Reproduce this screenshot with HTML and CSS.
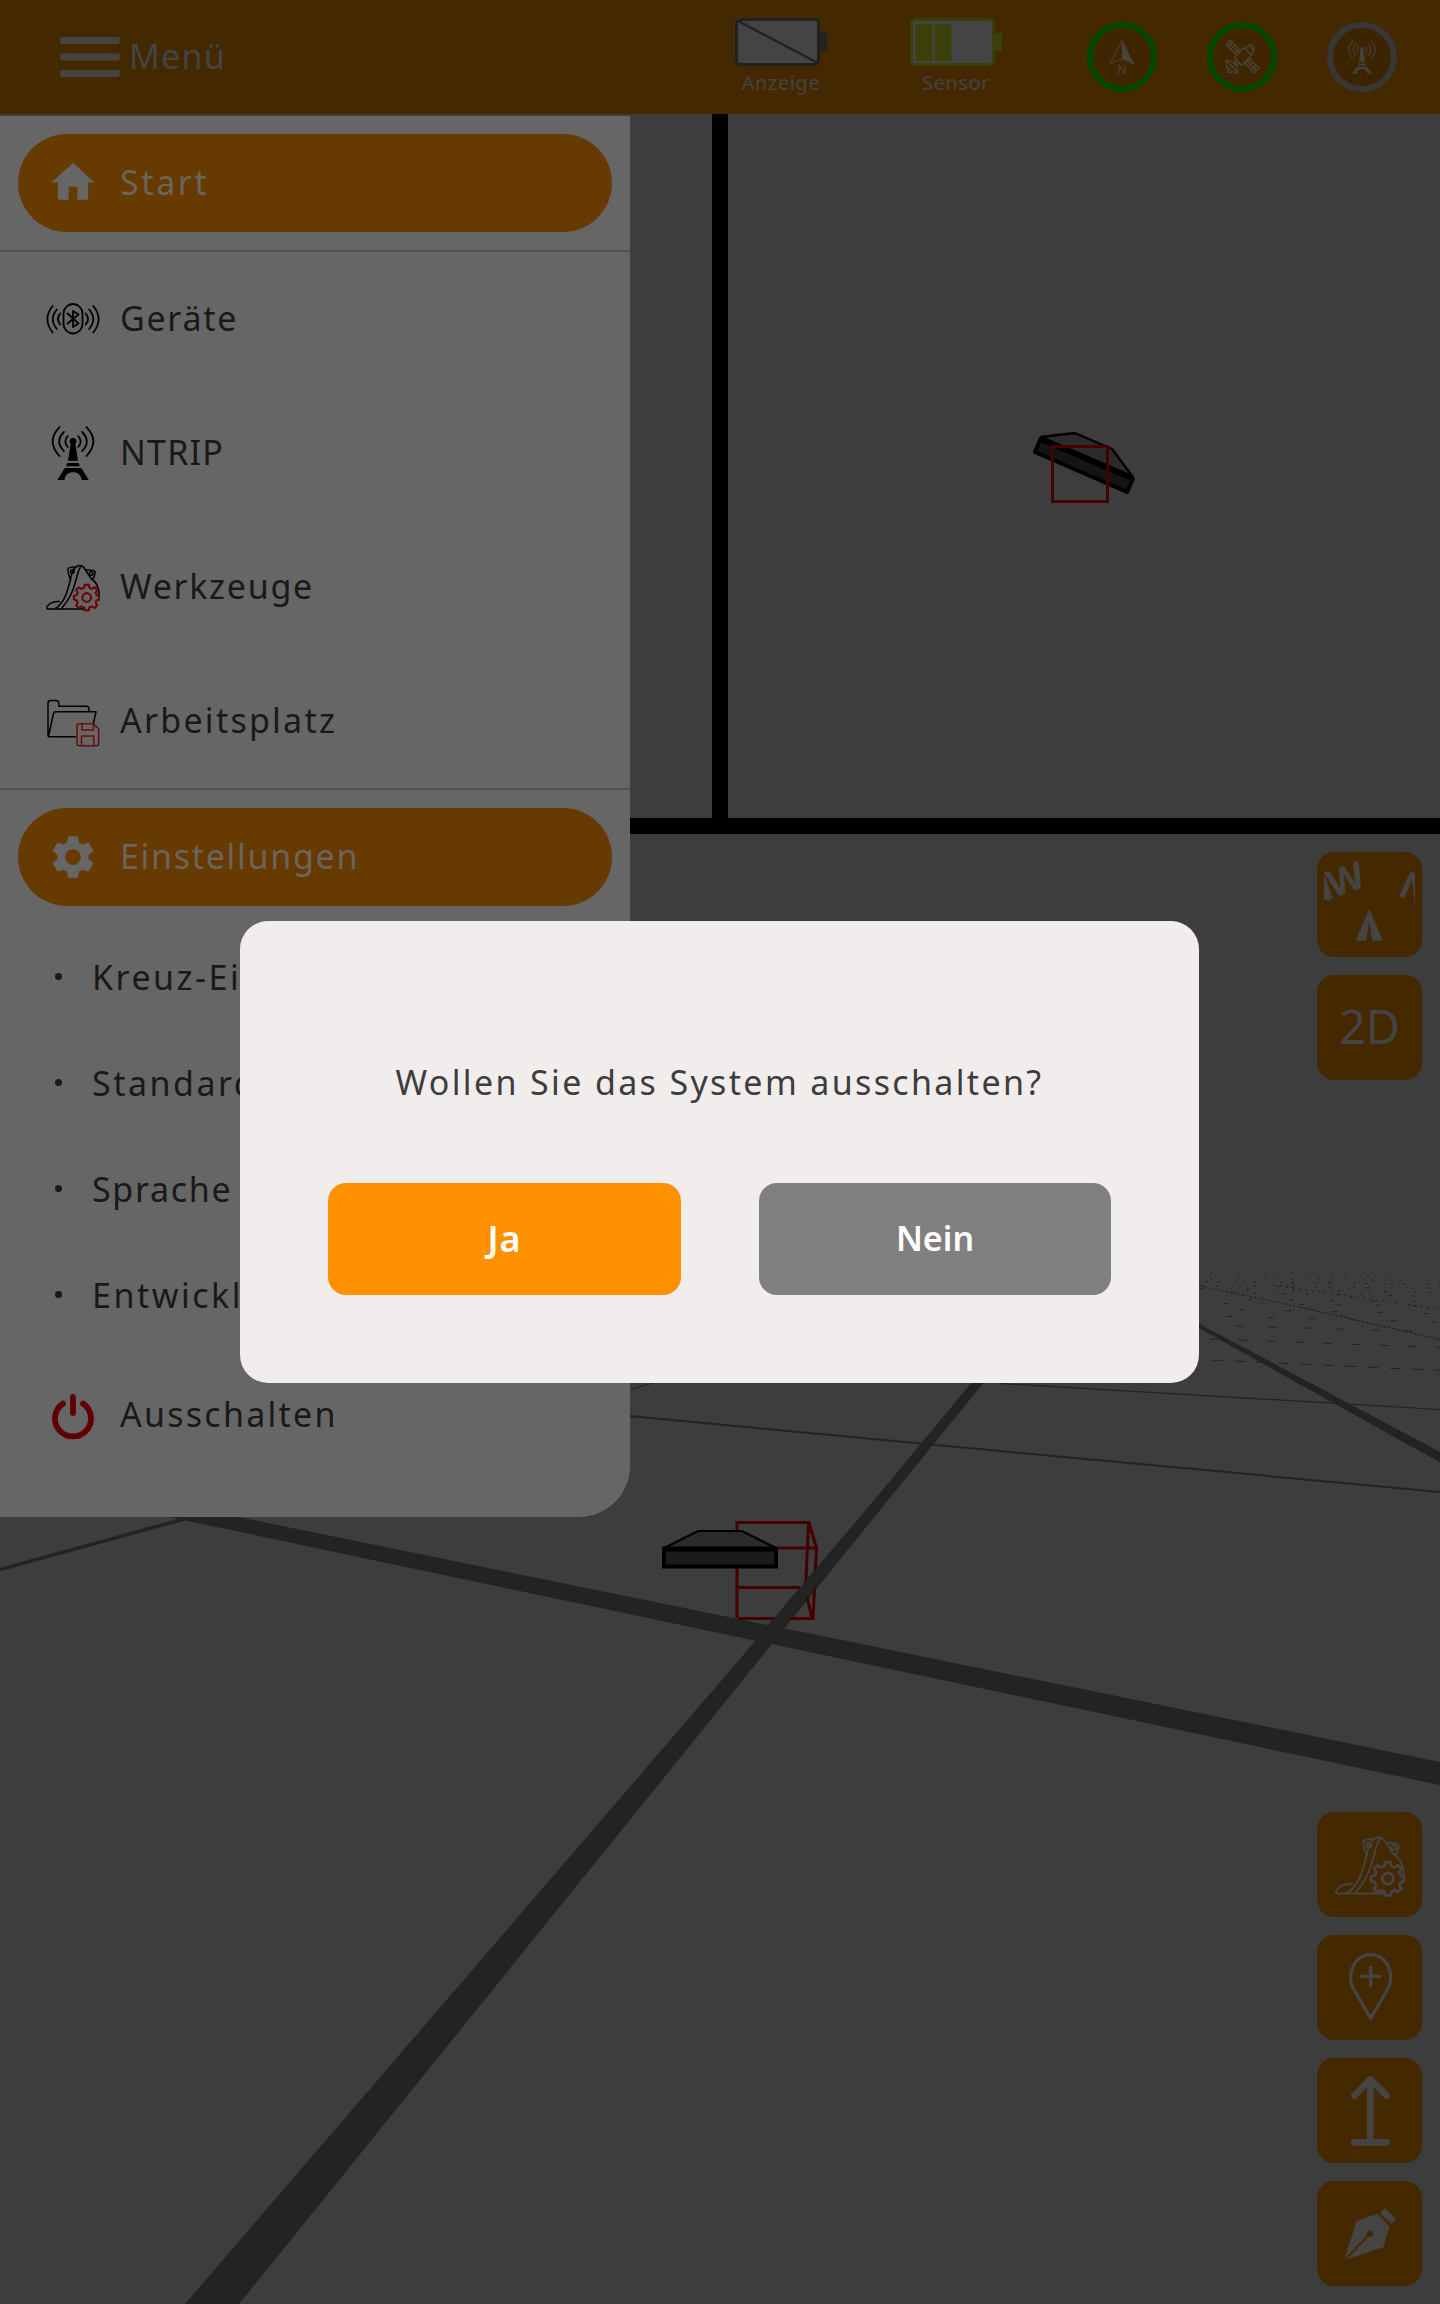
FILE: index.html
```html
<!DOCTYPE html>
<html lang="de">
<head>
<meta charset="utf-8">
<title>Menü</title>
<link rel="stylesheet" href="styles.css">
</head>
<body>
<svg class="defs" width="0" height="0">
  <symbol id="bucket" viewBox="0 0 54 54">
    <g fill="none" stroke="currentColor" stroke-width="1.500" stroke-linejoin="round" stroke-linecap="round">
      <path d="M38 49H2Q.5 49 .8 47C3 43 8 41.500 13.500 41.500M9.500 48.500C18 43 21 33 23.500 23C25.500 14 27 8 31.500 6Q36 4.500 38.500 8.500L45 18.500C49 21 52.500 25 53.200 34V40"/>
      <path d="M15.500 48.500C25 38 28 28 30.500 18C32 12 33 9 34.800 6.500M24.800 20C23 16 21.700 12 22 9Q22.500 7 29 7M40 10Q48 9.500 49 11.500C49.500 14 48 18 46 19.500"/>
      <circle cx="26.300" cy="11.500" r="1.800"/><circle cx="45.200" cy="13.500" r="1.800"/>
    </g>
    <g class="cog" fill="none" stroke-width="2.200" stroke-linejoin="round">
      <path d="M38.700 24.800h4l.7 3 2.600 1.100 2.700-1.600 2.600 2.700-1.600 2.700 1 2.500 2.500.7v3.600l-2.500.7-1 2.500 1.500 2.600-2.600 2.700-2.600-1.600-2.600 1.100-.7 2.900h-4l-.7-2.900-2.600-1.100-2.600 1.600-2.700-2.700 1.600-2.600-1.100-2.500-2.700-.7v-3.600l2.700-.7 1.100-2.500-1.600-2.700 2.700-2.700 2.600 1.600 2.600-1.100z"/>
      <circle cx="40.700" cy="37.500" r="4.300"/>
    </g>
  </symbol>
  <symbol id="tower" viewBox="0 0 54 54">
    <g fill="none" stroke="currentColor" stroke-width="1.800" stroke-linecap="round">
      <path d="M13.500 1.200Q-.2 15.500 13.500 30M17.900 6Q8.500 15.500 17.900 25.200M21.800 10.200Q16.800 15.500 21.800 21M40.500 1.200Q54.200 15.500 40.500 30M36.100 6Q45.500 15.500 36.100 25.200M32.200 10.200Q37.200 15.500 32.200 21"/>
    </g>
    <g fill="currentColor"><circle cx="27" cy="15.300" r="3.400"/>
    <path d="M25 16h4l3 18.700H22zM21.300 37h11.400l1.200 3.200H20zM18.700 42h16.600L42.800 54H35.600C35.600 43.500 18.600 43.500 18.600 54H11.400z"/></g>
  </symbol>
</svg>

<svg class="scene" viewBox="0 0 1440 2304">
  <g fill="#232323">
    <path d="M150 1499L1440 1762V1785L150 1513z"/>
    <path d="M185 2304L739 1660 880 1493 982 1370 994 1370 880 1510 759 1660 239 2304z"/>
    <path d="M1190 1319L1440 1452V1462.500L1190 1323z"/>
  </g>
  <g fill="none" stroke="#232323">
    <path stroke-width="3.500" d="M0 1569.500L184 1519"/>
    <path stroke-width="2" d="M630 1416L1000 1451 1440 1492"/>
    <path stroke-width="1.200" d="M1000 1383.500L1440 1409.500M625 1391L660 1381"/>
    <path stroke-width="1" d="M1212 1360L1440 1370.500" stroke-dasharray="11 11.200"/>
    <path stroke-width="1" d="M1210 1339L1440 1347.500" stroke-dasharray="9 19.300"/>
    <path stroke-width="1.200" d="M1199 1286L1300 1307" stroke-dasharray="2 2"/>
    <path stroke-width="1.200" d="M1300 1307L1440 1339.500" stroke-dasharray="3 1.500"/>
    <path stroke-width="1.200" d="M1273 1285L1440 1309.500" stroke-dasharray="2 4.500"/>
    <path stroke-width="1" d="M1235 1326L1440 1332" stroke-dasharray="8 26"/>
    <path stroke-width="1" d="M1227 1316.500L1440 1322" stroke-dasharray="6 35"/>
    <path stroke-width="1" d="M1239 1309.500L1440 1314" stroke-dasharray="6 40"/>
    <path stroke-width="1" d="M1223 1303.500L1440 1306" stroke-dasharray="5 33"/>
    <path stroke-width="1" d="M1248 1299.500L1440 1302.500" stroke-dasharray="4 37"/>
    <path stroke-width="1" d="M1230 1292.500L1440 1296.500" stroke-dasharray="4 19 3 27"/>
    <path stroke-width="1" d="M1200 1288.500L1440 1292.500" stroke-dasharray="3 27 2 14"/>
    <path stroke-width="1" d="M1201 1285.500L1440 1288.500" stroke-dasharray="2 12 3 21"/>
    <path stroke-width="1" d="M1206 1281.500L1440 1284.500" stroke-dasharray="2 9 3 16 1 6"/>
    <path stroke-width="1" opacity=".8" d="M1202 1278.500L1440 1280.500" stroke-dasharray="1 7 2 11 1 5"/>
    <path stroke-width="1" opacity=".6" d="M1200 1275.500H1440" stroke-dasharray="1 9 1 4 2 12"/>
    <path stroke-width="1" opacity=".5" d="M1204 1272.500H1440" stroke-dasharray="1 6 2 13 1 17"/>
  </g>
  <path fill="#000" d="M712 114h16v704h712v16H600v-16h112z"/>
  <g stroke="#000" stroke-linejoin="round">
    <path fill="#2b2b2b" stroke-width="2.300" d="M1041 437L1075 433 1112 449 1133 477z"/>
    <path fill="#141414" stroke-width="4" d="M1041 438L1133 478.500 1127 492 1035 452z"/>
    <path fill="none" stroke-width="6" d="M1043 440L1131 477.500"/>
  </g>
  <path fill="none" stroke="#440000" stroke-width="3" d="M1052.500 446.500h55v55h-55z"/>
  <g fill="none" stroke="#440000" stroke-width="3">
    <path d="M737 1618V1522.500H809L816.500 1548 813 1618.500H738M737 1548H816M737 1587.500H800M808.500 1524L805.500 1590 812 1618"/>
  </g>
  <path fill="#232323" d="M770 1623L830 1552V1569L786 1623z"/>
  <g stroke="#000">
    <path fill="#2b2b2b" stroke-width="2.200" d="M664 1548L698 1531H742L776 1548z"/>
    <path fill="#1b1b1b" stroke-width="4" d="M664 1549H776V1566.500H664z"/>
    <path fill="none" stroke-width="5" d="M663 1549H777"/>
  </g>
</svg>

<div class="app">
  <header class="topbar">
    <button class="menu-btn">
      <svg width="60" height="42" viewBox="0 0 60 42" fill="#454443"><path d="M.5 1h59v7H.5zM.5 17.500h59v7H.5zM.5 34h59v7H.5z"/></svg>
      <span class="label">Menü</span>
    </button>
    <div class="status">
      <div class="battery">
        <svg width="94" height="50" viewBox="0 0 94 50"><rect x="85" y="16" width="7" height="18" fill="#222"/><rect x="1.500" y="2.500" width="82" height="45" rx="4" fill="#444" stroke="#222" stroke-width="3"/><path d="M3 4L83 46" stroke="#222" stroke-width="2.500"/></svg>
        <span class="cap">Anzeige</span>
      </div>
      <div class="battery second">
        <svg width="94" height="50" viewBox="0 0 94 50"><rect x="85" y="16" width="7" height="18" fill="#3b400a"/><rect x="1.500" y="2.500" width="82" height="45" rx="4" fill="#444" stroke="#3b400a" stroke-width="3"/><rect x="5.500" y="7" width="17" height="37" rx="2" fill="#3b400a"/><rect x="24.500" y="7" width="17" height="37" rx="2" fill="#3b400a"/></svg>
        <span class="cap">Sensor</span>
      </div>
      <div class="rings">
        <svg width="70" height="70" viewBox="0 0 210 210"><circle cx="105" cy="105" r="96" fill="#3f2500" stroke="#004800" stroke-width="18"/><path d="M105 56L70 126 105 111 140 126z" fill="none" stroke="#494439" stroke-width="3" stroke-linejoin="round"/><path d="M105 56V111L140 126z" fill="#494439"/><text x="105" y="155" text-anchor="middle" font-size="37" fill="#494439">N</text></svg>
        <svg width="70" height="70" viewBox="0 0 210 210"><circle cx="105" cy="105" r="96" fill="#3f2500" stroke="#004800" stroke-width="18"/>
          <g fill="none" stroke="#494439" stroke-width="4" stroke-linejoin="round"><path d="M71 54L97 82 84 95 58 68zM77 61L64 74M84 69L71 82M66 63L90 87M128 110L156 139 141 153 114 124zM147 130L132 144M138 121L124 135M122 117L148 145M110 77L133 99 105 130 81 107zM117 82C119 68 134 64 141 74C144 86 138 95 129 95M127 71L140 87M88 114L84 120 92 128 98 122M57 116C56 136 70 151 92 153C94 141 90 133 84 126C76 119 68 116 57 116zM60 118L90 150M75 135L88 126M62 137V151H74"/></g></svg>
        <svg width="70" height="70" viewBox="0 0 210 210"><circle cx="105" cy="105" r="96" fill="#3c2400" stroke="#373737" stroke-width="18"/><svg x="53" y="53" width="104" height="104" color="#434039"><use href="#tower"/></svg></svg>
      </div>
    </div>
  </header>

  <main class="stage">
    <nav class="panel">
      <a class="item pill">
        <svg class="ico" viewBox="0 0 54 54"><path fill="#666" transform="translate(1 .5) scale(2.167)" d="M10 20v-6h4v6h5v-8h3L12 3 2 12h3v8z"/></svg>
        <span class="t-start">Start</span></a>
      <div class="group">
        <a class="item">
          <svg class="ico" viewBox="0 0 54 54" fill="none" stroke="#000" stroke-width="1.800" stroke-linecap="round" stroke-linejoin="round"><rect x="17.500" y="12" width="19" height="29.500" rx="9.500"/><path d="M21.500 21.500L32.500 31.500 27 35V19L32.500 22.500 21.500 31.500M6.700 14Q-4 27 6.700 40.500M10.800 17.500Q2.800 27 10.800 37M14.300 21.500Q9.500 27 14.300 32.500M47.300 14Q58 27 47.300 40.500M43.200 17.500Q51.200 27 43.200 37M39.700 21.500Q44.500 27 39.700 32.500"/></svg>
          <span class="t-mid">Geräte</span></a>
        <a class="item"><svg class="ico"><use href="#tower"/></svg><span>NTRIP</span></a>
        <a class="item"><svg class="ico red-cog"><use href="#bucket"/></svg><span class="t-mid">Werkzeuge</span></a>
        <a class="item">
          <svg class="ico" viewBox="0 0 54 54" fill="none" stroke="#000" stroke-width="1.500" stroke-linejoin="round"><path d="M30.500 42.800H3Q2 42.800 2 41.500V9Q2 6.500 4.500 6.500H10Q12.500 6.500 12.800 9V12.300H40.500Q43 12.300 43 15V17.700M2.500 42L7.500 19.500Q8 17.700 10 17.700H50L47.500 29"/><g stroke="#6a0c0c"><path d="M33.500 29.700H47.500L52.700 35V49.500Q52.700 51.700 50.500 51.700H33.500Q31 51.700 31 49.500V32Q31 29.700 33.500 29.700zM36 30V36H47.500V30M35.500 51.500V42H47.800V51.500"/></g></svg>
          <span class="t-wide">Arbeitsplatz</span></a>
      </div>
      <a class="item pill">
        <svg class="ico" viewBox="0 0 54 54"><path fill="#666" transform="translate(1 1) scale(2.167)" d="M19.140 12.940c.04-.3.060-.61.060-.94 0-.32-.02-.64-.07-.94l2.030-1.580c.18-.14.230-.41.120-.61l-1.920-3.320c-.12-.22-.37-.29-.59-.22l-2.390.960c-.5-.38-1.030-.7-1.620-.94l-.36-2.540c-.04-.24-.24-.41-.48-.41h-3.840c-.24 0-.43.170-.47.410l-.36 2.540c-.59.240-1.130.570-1.620.940l-2.390-.96c-.22-.08-.47 0-.59.220L2.740 8.870c-.12.210-.08.470.12.610l2.030 1.580c-.05.300-.09.630-.09.940s.02.640.07.940l-2.030 1.580c-.18.140-.23.410-.12.610l1.920 3.320c.12.220.370.290.59.220l2.390-.96c.5.380 1.030.7 1.620.940l.36 2.540c.05.240.24.410.48.410h3.840c.24 0 .44-.17.47-.41l.36-2.540c.59-.24 1.130-.56 1.620-.94l2.390.960c.22.080.47 0 .59-.22l1.920-3.320c.12-.22.070-.47-.12-.61l-2.010-1.580zM12 15.600c-1.980 0-3.600-1.620-3.600-3.600s1.620-3.600 3.600-3.600 3.600 1.620 3.600 3.600-1.620 3.600-3.600 3.600z"/></svg>
        <span class="t-mid">Einstellungen</span></a>
      <ul class="sub">
        <li>Kreuz-Einstellungen</li>
        <li>Standard</li>
        <li class="t-mid">Sprache</li>
        <li>Entwickler</li>
      </ul>
      <a class="item">
        <svg class="ico" viewBox="0 0 54 54" fill="none" stroke="#600000" stroke-width="5.800" stroke-linecap="round"><path d="M17 15.500A18 18 0 1 0 37 15.500M27 9V25"/></svg>
        <span class="t-wide">Ausschalten</span></a>
    </nav>

    <aside class="tools">
      <div class="toolset">
        <button class="tool"><svg width="105" height="105" viewBox="0 0 315 315"><g fill="#454443"><svg x="21" y="15" width="273" height="150" viewBox="21 15 273 150"><path d="M21 67L47 137 34 147 21 141z"/><text class="rose" transform="translate(47 139) rotate(-19)">W</text><text class="rose" transform="translate(238 128) rotate(24)">N</text></svg><path d="M157 170L116 266H147L157 208 166 266H198z"/></g></svg></button>
        <button class="tool mode">2D</button>
      </div>
      <div class="toolset">
        <button class="tool"><svg class="big" width="70" height="70"><use href="#bucket"/></svg></button>
        <button class="tool"><svg width="105" height="105" viewBox="0 0 315 315" fill="none" stroke="#454443" stroke-width="10" stroke-linecap="round" stroke-linejoin="round"><path d="M161 250L108 159C88 118 112 59 161 59S234 118 214 159zM161 97V152M133 124H189"/></svg></button>
        <button class="tool"><svg width="105" height="105" viewBox="0 0 315 315" fill="none" stroke="#454443" stroke-width="20" stroke-linecap="round" stroke-linejoin="round"><path d="M160 250V64M112 113L160 64 209 113M112 253H209"/></svg></button>
        <button class="tool"><svg width="105" height="105" viewBox="0 0 315 315"><path fill="#454443" d="M119 120L181 98 218 136 199 199 94 234 84 228zM204 81L237 115 224 130 189 95z"/><path stroke="#442800" stroke-width="6" d="M87 233L159 158"/><circle cx="159" cy="158" r="9.500" fill="#442800"/></svg></button>
      </div>
    </aside>
  </main>
</div>

<div class="overlay">
  <section class="dialog">
    <p>Wollen Sie das System ausschalten?</p>
    <div class="actions">
      <button class="yes">Ja</button>
      <button class="no">Nein</button>
    </div>
  </section>
</div>
</body>
</html>
```
FILE: styles.css
```css
* { box-sizing: border-box; }
body {
  margin: 0;
  width: 1440px;
  height: 2304px;
  overflow: hidden;
  position: relative;
  background: #3d3d3d;
  color: #191919;
  font-family: "Noto Sans", "Open Sans", sans-serif;
  font-size: 34px;
}
button { border: 0; padding: 0; background: none; font: inherit; color: inherit; }
svg { display: block; flex: none; }
.defs { position: absolute; }
.scene { position: absolute; left: 0; top: 0; width: 1440px; height: 2304px; }
.app { position: relative; height: 2304px; display: flex; flex-direction: column; }

.topbar {
  height: 114px;
  flex: none;
  background: #442800;
  display: flex;
  justify-content: space-between;
  padding-left: 60px;
  padding-right: 43px;
  color: #454443;
}
.menu-btn { display: flex; align-items: center; gap: 9px; }
.menu-btn .label { letter-spacing: 1.2px; padding-bottom: 2px; }
.status { display: flex; }
.battery { width: 94px; padding-top: 17px; display: flex; flex-direction: column; }
.battery.second { margin-left: 81px; }
.cap { font-size: 20px; line-height: 28px; margin-top: 2px; letter-spacing: .6px; width: 92px; text-align: center; }
.rings { display: flex; gap: 50px; align-items: center; margin-left: 83px; }

.stage { flex: 1; display: flex; justify-content: space-between; align-items: flex-start; }
.panel {
  width: 630px;
  height: 1401px;
  margin-top: 2px;
  padding-top: 18px;
  background: #666;
  border-bottom-right-radius: 51px;
}
.item {
  height: 134px;
  display: flex;
  align-items: center;
  gap: 20px;
  padding-left: 46px;
  letter-spacing: 1.2px;
}
.item span { padding-bottom: 2px; }
.item .t-start { letter-spacing: 2.6px; }
.item .t-mid { letter-spacing: 1.7px; }
.item .t-wide { letter-spacing: 2.250px; }
.ico { width: 54px; height: 54px; color: #000; }
.red-cog { --cog: #6a0808; }
.cog { stroke: var(--cog, currentColor); }
.pill {
  height: 98px;
  margin: 18px;
  padding-left: 28px;
  border-radius: 49px;
  background: #663a00;
  color: #6b655c;
}
.panel > .pill:first-child { margin-top: 0; }
.group { border-top: 2px solid #5a504a; border-bottom: 2px solid #5a504a; }
.sub { list-style: none; margin: 0; padding: 0; }
.sub li {
  height: 106px;
  display: flex;
  align-items: center;
  padding-left: 55px;
  padding-bottom: 1px;
  letter-spacing: 2.500px;
}
.sub .t-mid { letter-spacing: 1.7px; }
.sub li::before { content: ""; width: 7px; height: 7px; border-radius: 4px; background: #191919; margin-right: 30px; }

.tools {
  width: 105px;
  height: 2172px;
  margin-right: 18px;
  padding-top: 738px;
  display: flex;
  flex-direction: column;
  justify-content: space-between;
}
.toolset { display: flex; flex-direction: column; gap: 18px; }
.tool {
  width: 105px;
  height: 105px;
  border-radius: 17px;
  background: #442800;
  color: #454443;
  display: flex;
  align-items: center;
  justify-content: center;
}
.mode { font-size: 47px; padding-bottom: 3px; }
.rose { font-size: 114px; font-weight: 700; }

.overlay { position: absolute; inset: 0; display: flex; align-items: center; justify-content: center; }
.dialog {
  width: 959px;
  height: 462px;
  margin-right: 1px;
  border-radius: 28px;
  background: #f0edec;
  padding: 136px 88px 0;
}
.dialog p { margin: 0; height: 50px; line-height: 50px; text-align: center; color: #3d3d3d; letter-spacing: 2.350px; white-space: nowrap; }
.actions { display: flex; justify-content: space-between; margin-top: 76px; }
.actions button { width: 353px; height: 112px; border-radius: 18px; color: #fff; font-weight: 600; padding-bottom: 2px; }
.actions .yes { background: #ff9100; font-size: 36px; letter-spacing: 1px; }
.actions .no { background: #808080; width: 352px; }
```
